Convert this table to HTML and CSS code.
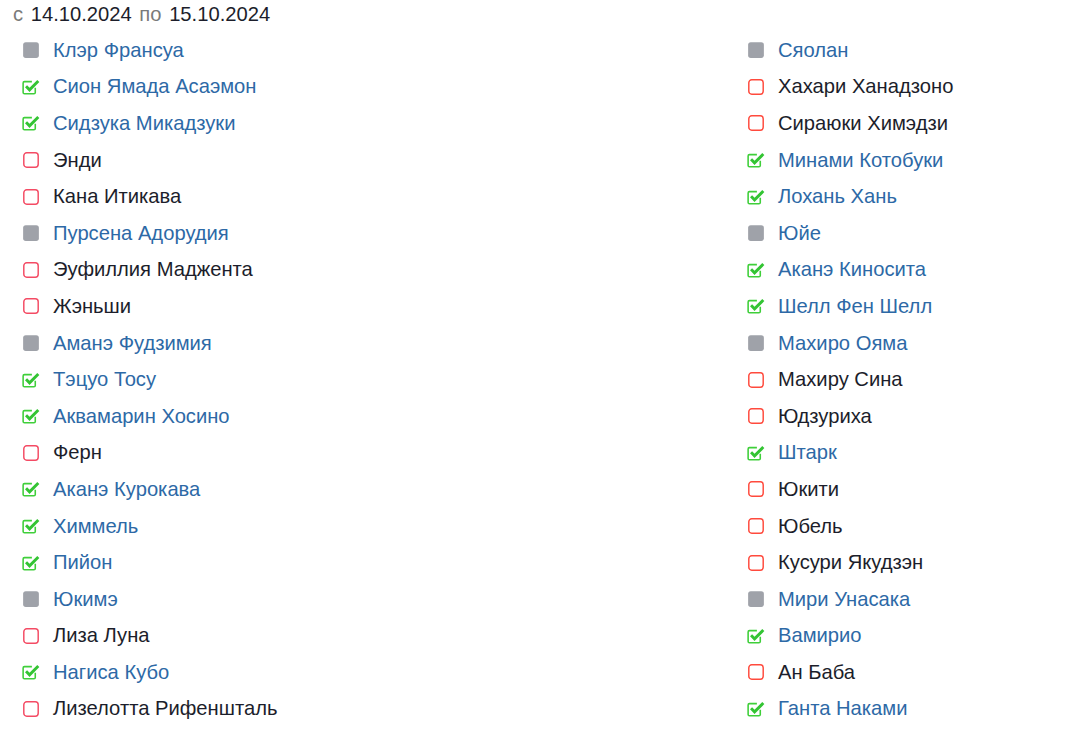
FILE: index.html
```html
<!DOCTYPE html>
<html lang="ru">
<head>
    <meta charset="UTF-8">
    <meta name="viewport" content="width=device-width, initial-scale=1.0">
    <title>Список</title>
    <link rel="stylesheet" href="styles.css">
</head>
<body>
    <svg class="defs" aria-hidden="true">
        <symbol id="i-gray" viewBox="0 0 16 16">
            <rect x="1" y="1" width="14" height="14" rx="2.4" fill="#9fa2a9"/>
        </symbol>
        <symbol id="i-check" viewBox="0 0 16 16">
            <path d="M11.8 8.6V12.8a1.2 1.2 0 0 1-1.2 1.2H2.2a1.2 1.2 0 0 1-1.2-1.2V4.4a1.2 1.2 0 0 1 1.2-1.2h6.6" fill="none" stroke="#3fcf3a" stroke-width="1.4"/>
            <path d="M3.6 7.4l3.1 3.1 7.8-7.8" fill="none" stroke="#33c433" stroke-width="2.6" stroke-linejoin="miter"/>
        </symbol>
        <symbol id="i-empty-l" viewBox="0 0 16 16">
            <rect x="1.6" y="1.6" width="12.8" height="12.8" rx="2.6" fill="none" stroke="#f44b64" stroke-width="1.3"/>
        </symbol>
        <symbol id="i-empty-r" viewBox="0 0 16 16">
            <rect x="1.6" y="1.6" width="12.8" height="12.8" rx="2.6" fill="none" stroke="#ff4a3d" stroke-width="1.3"/>
        </symbol>
    </svg>

    <div class="period">
        <span class="muted">с</span> 14.10.2024 <span class="muted">по</span> 15.10.2024
    </div>

    <main class="cols">
        <ul class="list left">
            <li class="on"><svg class="ico"><use href="#i-gray"/></svg>Клэр Франсуа</li>
            <li class="on"><svg class="ico"><use href="#i-check"/></svg>Сион Ямада Асаэмон</li>
            <li class="on"><svg class="ico"><use href="#i-check"/></svg>Сидзука Микадзуки</li>
            <li><svg class="ico"><use href="#i-empty-l"/></svg>Энди</li>
            <li><svg class="ico"><use href="#i-empty-l"/></svg>Кана Итикава</li>
            <li class="on"><svg class="ico"><use href="#i-gray"/></svg>Пурсена Адорудия</li>
            <li><svg class="ico"><use href="#i-empty-l"/></svg>Эуфиллия Маджента</li>
            <li><svg class="ico"><use href="#i-empty-l"/></svg>Жэньши</li>
            <li class="on"><svg class="ico"><use href="#i-gray"/></svg>Аманэ Фудзимия</li>
            <li class="on"><svg class="ico"><use href="#i-check"/></svg>Тэцуо Тосу</li>
            <li class="on"><svg class="ico"><use href="#i-check"/></svg>Аквамарин Хосино</li>
            <li><svg class="ico"><use href="#i-empty-l"/></svg>Ферн</li>
            <li class="on"><svg class="ico"><use href="#i-check"/></svg>Аканэ Курокава</li>
            <li class="on"><svg class="ico"><use href="#i-check"/></svg>Химмель</li>
            <li class="on"><svg class="ico"><use href="#i-check"/></svg>Пийон</li>
            <li class="on"><svg class="ico"><use href="#i-gray"/></svg>Юкимэ</li>
            <li><svg class="ico"><use href="#i-empty-l"/></svg>Лиза Луна</li>
            <li class="on"><svg class="ico"><use href="#i-check"/></svg>Нагиса Кубо</li>
            <li><svg class="ico"><use href="#i-empty-l"/></svg>Лизелотта Рифеншталь</li>
        </ul>
        <ul class="list right">
            <li class="on"><svg class="ico"><use href="#i-gray"/></svg>Сяолан</li>
            <li><svg class="ico"><use href="#i-empty-r"/></svg>Хахари Ханадзоно</li>
            <li><svg class="ico"><use href="#i-empty-r"/></svg>Сираюки Химэдзи</li>
            <li class="on"><svg class="ico"><use href="#i-check"/></svg>Минами Котобуки</li>
            <li class="on"><svg class="ico"><use href="#i-check"/></svg>Лохань Хань</li>
            <li class="on"><svg class="ico"><use href="#i-gray"/></svg>Юйе</li>
            <li class="on"><svg class="ico"><use href="#i-check"/></svg>Аканэ Киносита</li>
            <li class="on"><svg class="ico"><use href="#i-check"/></svg>Шелл Фен Шелл</li>
            <li class="on"><svg class="ico"><use href="#i-gray"/></svg>Махиро Ояма</li>
            <li><svg class="ico"><use href="#i-empty-r"/></svg>Махиру Сина</li>
            <li><svg class="ico"><use href="#i-empty-r"/></svg>Юдзуриха</li>
            <li class="on"><svg class="ico"><use href="#i-check"/></svg>Штарк</li>
            <li><svg class="ico"><use href="#i-empty-r"/></svg>Юкити</li>
            <li><svg class="ico"><use href="#i-empty-r"/></svg>Юбель</li>
            <li><svg class="ico"><use href="#i-empty-r"/></svg>Кусури Якудзэн</li>
            <li class="on"><svg class="ico"><use href="#i-gray"/></svg>Мири Унасака</li>
            <li class="on"><svg class="ico"><use href="#i-check"/></svg>Вамирио</li>
            <li><svg class="ico"><use href="#i-empty-r"/></svg>Ан Баба</li>
            <li class="on"><svg class="ico"><use href="#i-check"/></svg>Ганта Наками</li>
        </ul>
    </main>
</body>
</html>
```

FILE: styles.css
```css
@charset "UTF-8";

* {
    margin: 0;
    padding: 0;
    box-sizing: border-box;
}

body {
    background-color: white;
    font-family: "Liberation Sans", Arial, sans-serif;
    font-size: 20.2px;
    color: #1c1e2b;
}

.defs {
    position: absolute;
    width: 0;
    height: 0;
    overflow: hidden;
}

.period {
    height: 28px;
    line-height: 28px;
    padding-left: 13px;
    margin-bottom: 4px;
}
.muted {color: #7a7a7a; margin: 0 2px;}
.muted:first-child {margin-left: 0;}

.cols {
    display: flex;
}

.list {
    list-style: none;
}
.left {width: 725px;}

.list li {
    display: flex;
    align-items: center;
    height: 36.6px;
    padding-left: 22px;
    white-space: nowrap;
}
.list li.on {color: #2d69a6;}

.ico {
    width: 18px;
    height: 18px;
    margin-right: 13px;
    flex-shrink: 0;
}
```
